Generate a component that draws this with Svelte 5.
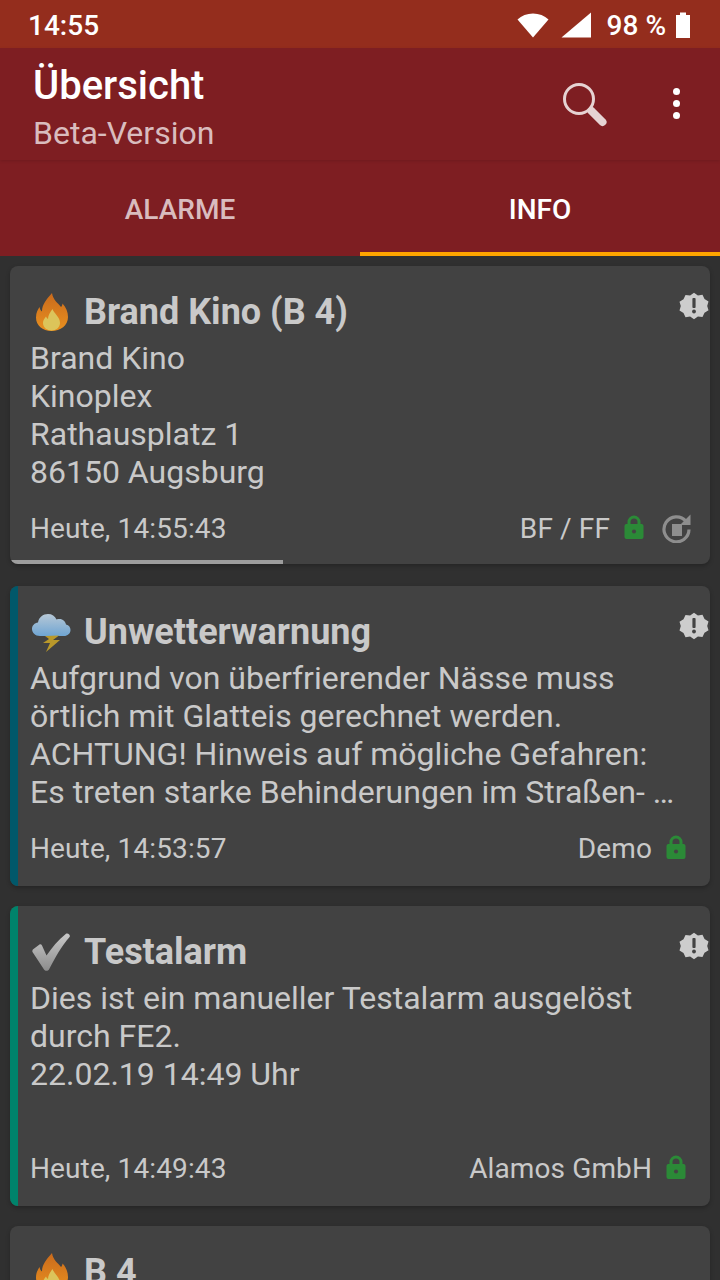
<script>
  const cards = [
    { icon: 'fire', title: 'Brand Kino (B 4)', lines: ['Brand Kino', 'Kinoplex', 'Rathausplatz 1', '86150 Augsburg'], time: 'Heute, 14:55:43', org: 'BF / FF', reply: true, progress: true, badge: true },
    { icon: 'storm', title: 'Unwetterwarnung', lines: ['Aufgrund von überfrierender Nässe muss', 'örtlich mit Glatteis gerechnet werden.', 'ACHTUNG! Hinweis auf mögliche Gefahren:', 'Es treten starke Behinderungen im Straßen- …'], time: 'Heute, 14:53:57', org: 'Demo', stripe: '#01586a', badge: true },
    { icon: 'check', title: 'Testalarm', lines: ['Dies ist ein manueller Testalarm ausgelöst', 'durch FE2.', '22.02.19 14:49 Uhr', ''], time: 'Heute, 14:49:43', org: 'Alamos GmbH', stripe: '#00836b', badge: true },
    { icon: 'fire', title: 'B 4', lines: [], time: '', org: '' }
  ];
</script>

<div class="screen">
  <div class="status">
    <span class="clock">14:55</span>
    <div class="status-right">
      <svg class="wifi" width="32" height="26" viewBox="0 0 32 26"><path d="M0.500 7.500C4.500 3.500 10 1.500 16 1.500s11.500 2 15.500 6L16 25.500z" fill="#fff"/></svg>
      <svg class="signal" width="30" height="26" viewBox="0 0 30 26"><path d="M30 0.500V25.500H0.500z" fill="#fff"/></svg>
      <span class="pct">98 %</span>
      <svg class="batt" width="14" height="26" viewBox="0 0 14 26"><path d="M4 0.500h6v2.500h4v23H0V3h4z" fill="#fff"/></svg>
    </div>
  </div>

  <div class="appbar">
    <div class="titles">
      <div class="title">Übersicht</div>
      <div class="sub">Beta-Version</div>
    </div>
    <svg class="search" width="46" height="46" viewBox="0 0 46 46">
      <circle cx="18" cy="18" r="14.500" fill="none" stroke="#e6d3d3" stroke-width="3"/>
      <path d="M28 28.500L41 41" stroke="#e6d3d3" stroke-width="3"/>
      <path d="M30.500 30L41.500 41" stroke="#e6d3d3" stroke-width="8" stroke-linecap="round"/>
    </svg>
    <div class="dots"><i></i><i></i><i></i></div>
  </div>

  <div class="tabs">
    <div class="tab">ALARME</div>
    <div class="tab active">INFO</div>
  </div>

  <div class="list">
    {#each cards as c}
      <article class="card" class:first={c.progress} style={c.stripe ? `--stripe:${c.stripe}` : ''}>
        {#if c.stripe}<span class="stripe"></span>{/if}
        {#if c.badge}
        <svg class="badge" width="30" height="30" viewBox="0 0 30 30">
          <path d="M15 1l3.900 2.600 4.600-.6 2 4.300 4 2.400-1.300 4.400 1.300 4.400-4 2.400-2 4.300-4.600-.6L15 27.400l-3.900-2.600-4.600.6-2-4.300-4-2.400 1.300-4.400L.5 9.900l4-2.400 2-4.300 4.600.6z" fill="#cdcdcd" transform="translate(0 .8)"/>
          <rect x="13.400" y="7" width="3.200" height="10" rx="1" fill="#444"/>
          <circle cx="15" cy="20.500" r="1.900" fill="#444"/>
        </svg>
        {/if}

        <h2>
          <span class="emoji">
            {#if c.icon === 'fire'}
              <svg width="38" height="40" viewBox="0 0 38 40">
                <defs>
                  <linearGradient id="fl" x1="0" y1="0" x2="0" y2="1"><stop offset="0" stop-color="#c96a1c"/><stop offset="1" stop-color="#e8901f"/></linearGradient>
                </defs>
                <path d="M20 1c1 7 6 10 9 14 1-1 1.500-2.500 1.500-3.500C34 15 36 20 36 25c0 8.500-7.500 14-16.500 14S4 33.500 4 25.500c0-5 2-8 3.500-10.500.500 2 1 3.500 2.500 4.500C10 12 15 7 20 1z" fill="url(#fl)"/>
                <path d="M20.500 17c1 4 7.500 8 7.500 14 0 4.500-4 7.500-8.500 7.500S11 35.500 11 31c0-3 1.500-4.500 3-6.500.500 1.200 1 2 2 2.500 0-3.500 2-6.500 4.500-10z" fill="#dcc45a"/>
              </svg>
            {:else if c.icon === 'storm'}
              <svg width="40" height="42" viewBox="0 0 40 42">
                <defs>
                  <linearGradient id="cl" x1="0" y1="0" x2="0" y2="1"><stop offset="0" stop-color="#b7c8d6"/><stop offset="1" stop-color="#6fa5d3"/></linearGradient>
                </defs>
                <path d="M9 25C4 25 1 21.500 1 18s2.500-6 6-6.500C8 6 12 3 17 3c4 0 7 2 8.500 5.500 1-.500 2-.500 3-.500 3.500 0 6 2.500 6.500 5.500 3 .500 4.500 3 4.500 5.500 0 3.500-3 6-6.500 6z" fill="url(#cl)"/>
                <path d="M14 25l14-.500-6 4.500h7L15 41l4-9h-7l6-4z" fill="#b9982a"/>
              </svg>
            {:else}
              <svg width="42" height="40" viewBox="0 0 42 40">
                <defs>
                  <linearGradient id="ck" x1="0" y1="0" x2="0" y2="1"><stop offset="0" stop-color="#c9c9c9"/><stop offset="1" stop-color="#8c8c8c"/></linearGradient>
                </defs>
                <path d="M3.500 17l6-4.500c1-.500 2 0 2.500 1l4.500 10C22 16 28 8 36 1.800c1.500-1 4.500 .500 3.800 3C31 15 25 26 19 37.500c-1 1.800-4 1.800-5 0L2.500 20c-.500-1 0-2.300 1-3z" fill="url(#ck)"/>
              </svg>
            {/if}
          </span>
          <span>{c.title}</span>
        </h2>

        <div class="body">
          {#each c.lines as l}<div class="line">{l || '\u00a0'}</div>{/each}
        </div>

        {#if c.time}
        <footer class:wide={c.reply}>
          <span>{c.time}</span>
          <span class="right">
            <span>{c.org}</span>
            <svg class="lock" width="20" height="26" viewBox="0 0 20 26">
              <path d="M5 10V7a5 5 0 0 1 10 0v3" fill="none" stroke="#2b8a37" stroke-width="3"/>
              <path d="M2 9h16a2 2 0 0 1 1.500 2v11a2 2 0 0 1-2 2H2.500a2 2 0 0 1-2-2V11A2 2 0 0 1 2 9z" fill="#2b8a37"/>
              <circle cx="10" cy="16.500" r="2" fill="#444"/>
            </svg>
            {#if c.reply}
              <svg class="reply" width="30" height="30" viewBox="0 0 30 30">
                <path d="M24 8.200A12.500 12.500 0 1 0 27 16.500" fill="none" stroke="#8e8e8e" stroke-width="3.200"/>
                <path d="M28.500 1.500V12H18z" fill="#8e8e8e"/>
                <path d="M10 11h10v12H10z" fill="#8e8e8e"/>
              </svg>
            {/if}
          </span>
        </footer>
        {/if}
        {#if c.progress}<span class="progress"></span>{/if}
      </article>
    {/each}
  </div>
</div>

<style>
  :global(body) { margin: 0; background: #303030; }
  .screen { width: 720px; height: 1280px; overflow: hidden; background: #303030; font-family: Roboto, sans-serif; }

  .status { height: 48px; background: #942d1d; color: #fff; display: flex; align-items: center; justify-content: space-between; padding: 0 30px 0 28px; box-sizing: border-box; }
  .clock { font-size: 28px; font-weight: 500; position: relative; top: 1px; }
  .status-right { display: flex; align-items: center; position: relative; top: 1px; }
  .wifi { margin-right: 12px; margin-left: -2px; }
  .signal { margin-right: 16px; }
  .pct { font-size: 28px; font-weight: 500; margin-right: 10px; }

  .appbar { height: 112px; background: #7e1e22; display: flex; align-items: flex-start; padding: 0 40px 0 33px; box-sizing: border-box; box-shadow: 0 1px 3px rgba(0,0,0,.12); position: relative; }
  .titles { flex: 1; }
  .title { font-size: 40px; font-weight: 500; color: #fff; line-height: 44px; margin-top: 16px; }
  .sub { font-size: 32px; color: #d9bcbe; line-height: 38px; margin-top: 6px; }
  .search { margin-top: 33px; margin-right: 66px; }
  .dots { display: flex; flex-direction: column; gap: 5px; margin-top: 40px; }
  .dots i { display: block; width: 7px; height: 7px; border-radius: 50%; background: #fff; }

  .tabs { height: 96px; background: #7e1e22; display: flex; }
  .tab { flex: 1; display: flex; align-items: center; justify-content: center; font-size: 28px; font-weight: 500; color: #d9bcbe; height: 96px; box-sizing: border-box; padding-top: 2px; }
  .tab.active { color: #fff; border-bottom: 4px solid #ffa500; padding-top: 6px; }

  .list { padding: 10px; display: flex; flex-direction: column; gap: 20px; }
  .card { position: relative; height: 300px; flex: none; background: #424242; border-radius: 8px; box-shadow: 0 2px 4px rgba(0,0,0,.25); padding: 24px 20px 0 20px; box-sizing: border-box; overflow: hidden; color: #c9c9c9; display: flex; flex-direction: column; }
  .card.first { height: 298px; margin-bottom: 2px; }
  .stripe { position: absolute; left: 0; top: 0; bottom: 0; width: 8px; background: var(--stripe); }
  .badge { position: absolute; right: 1px; top: 25px; }

  h2 { margin: 0; height: 44px; display: flex; align-items: center; gap: 12px; font-size: 36px; font-weight: 700; color: #c9c9c9; line-height: 44px; }
  .emoji { width: 42px; height: 44px; display: flex; align-items: center; justify-content: center; flex: none; }
  .body { margin-top: 5px; font-size: 32px; line-height: 38px; color: #c9c9c9; }
  .line { white-space: nowrap; height: 38px; }

  footer { position: absolute; left: 20px; right: 24px; top: 246px; height: 32px; display: flex; justify-content: space-between; align-items: center; font-size: 28px; letter-spacing: .12px; }
  footer.wide { right: 18px; }
  .right { display: flex; align-items: center; gap: 14px; }
  .reply { margin-left: 4px; }
  .progress { position: absolute; left: 0; bottom: 0; height: 4px; width: 273px; background: #9e9e9e; }
</style>
